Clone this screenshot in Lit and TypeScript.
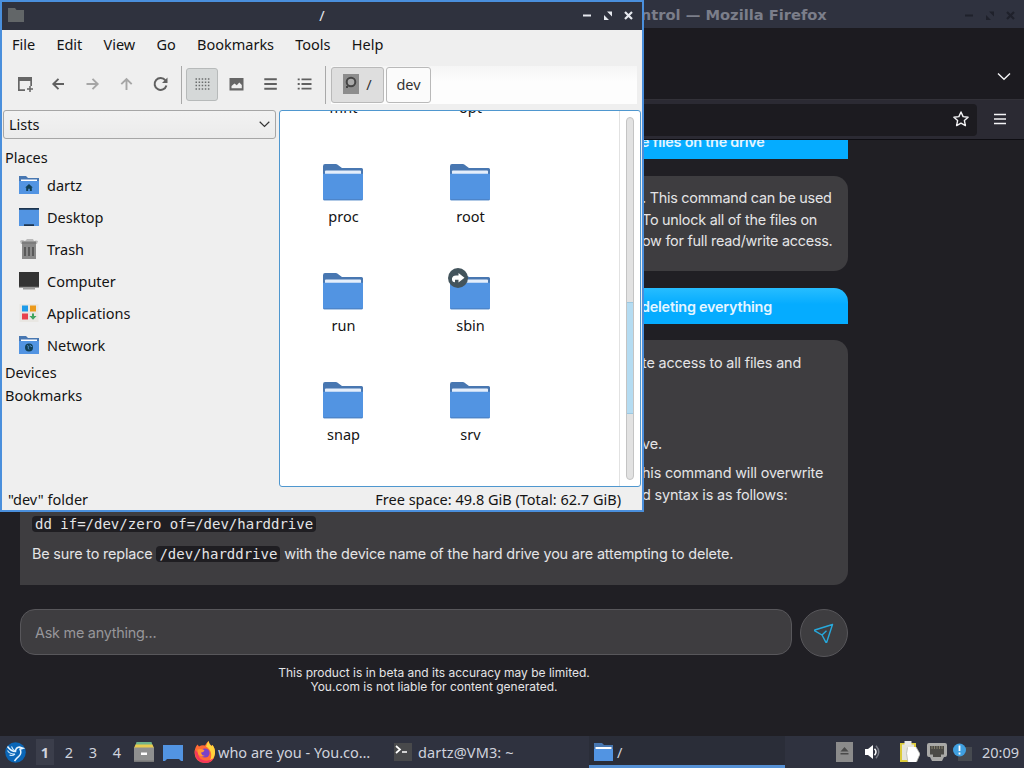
import { html, css, svg, LitElement } from 'lit'
import { customElement, property } from 'lit/decorators.js'
import { classMap } from 'lit/directives/class-map.js'

const folder = html`
  <svg width="48" height="48" viewBox="0 0 48 48">
    <path d="M4 7.200Q4 5 6 5h10.500q1.500 0 2.800 1.200L23 9h19.500Q44 9 44 10.500V24H4Z" fill="#4877b1"/>
    <path d="M6 12.500q0-.9.9-.9h34.200q.9 0 .9.900V20H6Z" fill="#e4eefb"/>
    <path d="M4 14.800h40V40q0 1.300-1.300 1.300H5.300Q4 41.300 4 40Z" fill="#5294e2"/>
    <path d="M4.300 40.400q.2.900 1.200.9h37q1 0 1.200-.9Z" fill="#4877b1"/>
  </svg>`

const smallFolder = (emblem: unknown) => html`
  <svg width="20" height="20" viewBox="0 0 20 20">
    <path d="M0 1h7l2 2h11v15H0Z" fill="#4877b1"/>
    <path d="M2 4.500h16V8H2Z" fill="#fff"/>
    <path d="M0 6h20v13H0Z" fill="#5294e2"/>
    ${emblem}
  </svg>`

const placeIcons: Record<string, unknown> = {
  home: smallFolder(svg`<path d="M10 9l-3.800 3.600h1V16h2v-2.200h1.600V16h2v-3.400h1Z" fill="#103f55"/>`),
  desktop: html`
    <svg width="20" height="20" viewBox="0 0 20 20">
      <path d="M0 1h20v18H0Z" fill="#5294e2"/>
      <path d="M0 1h20v1.800H0ZM5 17.300h10V19H5Z" fill="#1d344f"/>
    </svg>`,
  trash: html`
    <svg width="20" height="20" viewBox="0 0 20 20">
      <path d="M1 2q2-2 5 0l2-2h6l1 2q2-1 4 0l-1 3H2Z" fill="#b9b9b9"/>
      <path d="M3 4h14v16H3Z" fill="#8a8a8a"/>
      <path d="M3 2.500h14V5H3Z" fill="#7d7d7d"/>
      <path d="M6 8v9M10 8v9M14 8v9" stroke="#555" stroke-width="1.800"/>
    </svg>`,
  computer: html`
    <svg width="20" height="20" viewBox="0 0 20 20">
      <path d="M0 1h20v15H0Z" fill="#333"/>
      <path d="M0 15h20v1.500H0Z" fill="#494949"/>
      <path d="M4 16.500h12v2H4Z" fill="#999"/>
    </svg>`,
  applications: html`
    <svg width="20" height="20" viewBox="0 0 20 20">
      <path d="M.5 1h19v18H.5Z" fill="#e9e7e3"/>
      <path d="M3 2.500h6v6H3Z" fill="#1e9be9"/>
      <path d="M11 2.500h6v6h-6Z" fill="#eb9a1c"/>
      <path d="M3 10.500h6v6H3Z" fill="#e8414d"/>
      <path d="M13 10.500h2v2.500h2.500L14 16.700 10.500 13H13Z" fill="#3fa560"/>
    </svg>`,
  network: smallFolder(svg`
    <circle cx="10" cy="12.500" r="4" fill="#103f55"/>
    <path d="M8 10.500l1.800 1-.8 1.500 1 1.500M11 9.800l.6 1.500 1.600.4" stroke="#4d8ac6" fill="none"/>`),
}

const toolIcons: Record<string, unknown> = {
  newtab: svg`
    <path d="M2 1h14v9h-1.700V5H3.700v8.300H9V15H2Z" fill="#666"/>
    <path d="M14 10v6M11 13h6" stroke="#666" stroke-width="1.500"/>`,
  back: svg`<path d="M14 8H3M8.500 2.800L3.300 8l5.200 5.200" stroke="#606060" stroke-width="1.900" fill="none"/>`,
  forward: svg`<path d="M2.500 8h11M8.500 2.800L13.700 8l-5.200 5.200" stroke="#a6a6a6" stroke-width="1.900" fill="none"/>`,
  up: svg`<path d="M8.500 14V3M3.300 8.200L8.500 3l5.200 5.200" stroke="#a6a6a6" stroke-width="1.900" fill="none"/>`,
  reload: svg`
    <path d="M13.400 4.300A6 6 0 1 0 14.400 9.500" stroke="#606060" stroke-width="2" fill="none"/>
    <path d="M15.500 1.500V7h-5.500Z" fill="#606060"/>`,
  grid: svg`<path d="M1.500 3h14M1.500 6.300h14M1.500 9.600h14M1.500 13h14" stroke="#6b6d6d" stroke-width="1.500" stroke-dasharray="1.500 1.600"/>`,
  thumbs: svg`<path fill-rule="evenodd" d="M1.500 2h14v12.500h-14ZM3.500 12.300h10.300V9L11.300 6.500 8.800 9.300 6.500 7.500 3.500 10Z" fill="#666"/>`,
  compact: svg`<path d="M2.300 3.300h12.500M2.300 8h12.500M2.300 12.700h12.500" stroke="#606060" stroke-width="1.900"/>`,
  list: svg`
    <path d="M5.500 3.300h10M5.500 8h10M5.500 12.700h10" stroke="#606060" stroke-width="1.800"/>
    <path d="M1.700 3.300h2M1.700 8h2M1.700 12.700h2" stroke="#606060" stroke-width="1.800"/>`,
}

const toolIcon = (name: string) => html`<svg width="17" height="17" viewBox="0 0 17 17">${toolIcons[name]}</svg>`

const windowButtons = html`
  <svg width="54" height="11" viewBox="0 0 54 11">
    <path d="M1 5.500h8" stroke="currentColor" stroke-width="2"/>
    <path d="M22 10V5l5 5ZM30 1.500v5L25 1.500Z" fill="currentColor"/>
    <path d="M43 2l7 7M50 2l-7 7" stroke="currentColor" stroke-width="2.200"/>
  </svg>`

@customElement('file-manager')
export class FileManager extends LitElement {
  static styles = css`
  :host {
    display: flex;
    flex-direction: column;
    box-sizing: border-box;
    width: 644px;
    height: 512px;
    border: 2px solid #4a8fdc;
    background: #efefef;
    color: #141414;
    font: 14.5px/20px "Noto Sans", sans-serif;
    white-space: nowrap;
  }
  svg {
    display: block;
  }
  .title {
    display: grid;
    grid-template-columns: 75px 1fr 75px;
    align-items: center;
    height: 28px;
    background: #2f323e;
    color: #e6e8ee;
    text-align: center;
  }
  .title span {
    margin-top: -2px;
  }
  .title svg {
    margin-top: -2px;
  }
  .title svg:first-child {
    margin-left: 6px;
  }
  .title svg:last-child {
    margin-left: 15px;
  }
  .menu {
    display: flex;
    gap: 21.2px;
    height: 20px;
    padding: 4px 10px 9px;
  }
  .tools {
    display: flex;
    align-items: center;
    height: 43px;
    padding: 0 0 3px 5px;
  }
  .tool {
    display: grid;
    place-items: center;
    box-sizing: border-box;
    width: 34px;
    height: 33px;
  }
  .tool.active {
    width: 32px;
    margin: 0 1px;
    border: 1px solid #b7baba;
    border-radius: 3px;
    background: #d5d8d8;
  }
  .sep {
    width: 1px;
    height: 38px;
    margin: 0 3px 0 4px;
    background: #a9a9a9;
  }
  .path {
    display: flex;
    flex: 1;
    align-items: center;
    gap: 2px;
    height: 38px;
    margin: 0 5px 0 2px;
    background: linear-gradient(#f5f5f5, #fdfdfd 40%);
  }
  .crumb {
    display: flex;
    box-sizing: border-box;
    align-items: center;
    justify-content: center;
    gap: 7px;
    width: 45px;
    height: 36px;
    padding-bottom: 2px;
    border: 1px solid #b9b9b9;
    border-radius: 3px;
    background: #fbfbfb;
    color: #333;
  }
  .crumb.root {
    width: 53px;
    background: #dedede;
  }
  .body {
    display: grid;
    grid-template-columns: 274px 362px;
    column-gap: 2px;
    height: 377px;
    padding: 1px 1px 0;
  }
  .combo {
    display: flex;
    box-sizing: border-box;
    align-items: center;
    justify-content: space-between;
    width: 273px;
    height: 29px;
    padding: 0 5px 2px;
    border: 1px solid #a6a6a6;
    border-radius: 3px;
    background: linear-gradient(#f2f2f2, #ebebeb);
  }
  .combo svg {
    margin-top: 2px;
  }
  .head {
    height: 23px;
    padding-left: 2px;
    line-height: 23px;
  }
  .head.first {
    margin-top: 7px;
  }
  .place {
    display: flex;
    align-items: center;
    gap: 8px;
    height: 32px;
    padding-left: 16px;
  }
  .view {
    display: flex;
    box-sizing: border-box;
    height: 377px;
    border: 1px solid #4f97cf;
    border-radius: 3px;
    background: #fff;
    overflow: hidden;
  }
  .files {
    display: grid;
    flex: 1;
    grid-template-columns: 127px 127px;
    grid-auto-rows: 109px;
    align-content: start;
    margin-top: -61px;
    border-right: 1px solid #e2e2e2;
  }
  .file {
    display: flex;
    flex-direction: column;
    align-items: center;
    position: relative;
  }
  .file > svg {
    margin: 0 1px -1px 0;
  }
  .file .link {
    position: absolute;
    left: 41px;
    top: 0;
  }
  .track {
    box-sizing: border-box;
    width: 8px;
    height: 363px;
    margin: 6px 6px 0;
    padding-top: 184px;
    border: 1px solid #c4c4c4;
    border-radius: 4px;
    background: #e2e2e2;
  }
  .thumb {
    height: 112px;
    background: #b5dcf2;
    border: solid #9dc9e2;
    border-width: 1px 0;
    box-sizing: border-box;
  }
  .status {
    display: flex;
    flex: 1;
    align-items: center;
    justify-content: space-between;
    padding: 0 21px 0 6px;
  }
  `

  /** Lines of the menu bar */
  @property({ type: Array })
  menus = ['File', 'Edit', 'View', 'Go', 'Bookmarks', 'Tools', 'Help']

  @property({ type: Array })
  places = [
    ['home', 'dartz'],
    ['desktop', 'Desktop'],
    ['trash', 'Trash'],
    ['computer', 'Computer'],
    ['applications', 'Applications'],
    ['network', 'Network'],
  ]

  @property({ type: Array })
  files = ['mnt', 'opt', 'proc', 'root', 'run', 'sbin', 'snap', 'srv']

  private renderTool(name: string) {
    return html`<div class=${classMap({ tool: true, active: name === 'grid' })}>${toolIcon(name)}</div>`
  }

  private renderFile(name: string) {
    return html`
      <div class="file">
        ${folder}
        ${name === 'sbin' ? html`
          <svg class="link" width="20" height="20" viewBox="0 0 20 20">
            <circle cx="10" cy="10" r="10" fill="#43545c"/>
            <path d="M10.500 5l6 4.800-6 4.700v-2.700H7v2.500Q3.500 14 4 10.500 4.500 7.700 8 7.500h2.500Z" fill="#fff"/>
          </svg>` : ''}
        <span>${name}</span>
      </div>`
  }

  render() {
    return html`
      <div class="title">
        <svg width="16" height="14" viewBox="0 0 16 14"><path d="M0 0h7l1.500 2H16v12H0Z" fill="#626668"/></svg>
        <span>/</span>
        ${windowButtons}
      </div>
      <div class="menu">${this.menus.map(m => html`<span>${m}</span>`)}</div>
      <div class="tools">
        ${['newtab', 'back', 'forward', 'up', 'reload'].map(n => this.renderTool(n))}
        <div class="sep"></div>
        ${['grid', 'thumbs', 'compact', 'list'].map(n => this.renderTool(n))}
        <div class="sep"></div>
        <div class="path">
          <div class="crumb root">
            <svg width="16" height="20" viewBox="0 0 16 20">
              <path d="M0 0h16v20H0Z" fill="#8d8d8d"/>
              <circle cx="8" cy="8" r="4.300" fill="#aaa" stroke="#454545" stroke-width="2"/>
              <path d="M4 12v2" stroke="#454545" stroke-width="2"/>
            </svg>
            <span>/</span>
          </div>
          <div class="crumb">dev</div>
        </div>
      </div>
      <div class="body">
        <div>
          <div class="combo">
            <span>Lists</span>
            <svg width="11" height="7" viewBox="0 0 11 7"><path d="M.7.8l4.800 4.700L10.300.8" stroke="#333" stroke-width="1.200" fill="none"/></svg>
          </div>
          <div class="head first">Places</div>
          ${this.places.map(([icon, name]) => html`<div class="place">${placeIcons[icon]}<span>${name}</span></div>`)}
          <div class="head">Devices</div>
          <div class="head">Bookmarks</div>
        </div>
        <div class="view">
          <div class="files">${this.files.map(f => this.renderFile(f))}</div>
          <div class="track"><div class="thumb"></div></div>
        </div>
      </div>
      <div class="status">
        <span>"dev" folder</span>
        <span class="space">Free space: 49.8 GiB (Total: 62.7 GiB)</span>
      </div>
    `
  }
}

@customElement('browser-window')
export class BrowserWindow extends LitElement {
  static styles = css`
  :host {
    display: flex;
    flex-direction: column;
    width: 1024px;
    height: 736px;
    background: #201f24;
    color: #e4e4e6;
    font: 14.4px/21.6px Inter, sans-serif;
    white-space: nowrap;
  }
  svg {
    display: block;
  }
  .title {
    display: flex;
    box-sizing: border-box;
    justify-content: space-between;
    align-items: center;
    height: 28px;
    padding: 2px 6px 0 620px;
    background: #2f323f;
    color: #7b7e8a;
    font: bold 14.67px/20px "DejaVu Sans", sans-serif;
  }
  .title svg {
    color: #1f212b;
  }
  .tabs {
    display: flex;
    justify-content: flex-end;
    align-items: center;
    box-sizing: border-box;
    height: 71px;
    padding: 26px 13px 0 0;
    background: #1c1b20;
  }
  .nav {
    display: flex;
    box-sizing: border-box;
    align-items: center;
    height: 41px;
    padding-right: 17px;
    gap: 16px;
    border-top: 1px solid #323138;
    border-bottom: 1px solid #0e0d12;
    background: #2b2a33;
  }
  .nav > svg {
    margin-top: -2px;
  }
  .url {
    display: flex;
    flex: 1;
    justify-content: flex-end;
    align-items: center;
    height: 32px;
    padding-right: 8px;
    border-radius: 0 4px 4px 0;
    background: #1c1b20;
  }
  .url svg {
    margin-top: -1px;
  }
  .chat {
    display: flex;
    flex-direction: column;
    width: 828px;
    padding-left: 20px;
    letter-spacing: -.16px;
  }
  .ask {
    box-sizing: border-box;
    height: 36px;
    padding: 8px 0 0 621px;
    border-radius: 14px 14px 0 0;
    background: linear-gradient(#27bdff, #05acff 45%);
    color: #e4f5ff;
    font-weight: 600;
    letter-spacing: -.22px;
  }
  .ask.cut {
    height: 19px;
    padding-top: 0;
    border-radius: 0;
    background: #05acff;
    overflow: hidden;
  }
  .ask.cut span {
    display: block;
    margin-top: -9px;
  }
  .answer {
    box-sizing: border-box;
    height: 95px;
    margin: 17px 0;
    padding: 11px 12px 0;
    border-radius: 14px 14px 14px 0;
    background: #3e3d40;
    letter-spacing: -.25px;
  }
  .answer.long {
    height: 245px;
    margin: 16px 0 24px;
    padding-top: 12px;
    border-radius: 14px 14px 14px 0;
    letter-spacing: -.16px;
  }
  .answer.long, .answer {
    border-radius: 14px 14px 14px 0;
  }
  .tail {
    padding-left: 610px;
  }
  .gap {
    height: 59px;
  }
  p {
    margin: 0 0 8px;
  }
  code {
    padding: 0 3px;
    border-radius: 4px;
    background: #1f1e22;
    font: 14px/17px "DejaVu Sans Mono", monospace;
    letter-spacing: 0;
  }
  .entry {
    display: flex;
    gap: 8px;
    height: 48px;
  }
  .input {
    flex: 1;
    height: 44px;
    padding-left: 14px;
    border: 1px solid #58575b;
    border-radius: 15px;
    background: #3e3d40;
    color: #97969a;
    line-height: 46px;
    letter-spacing: -.24px;
  }
  .send {
    display: grid;
    place-items: center;
    width: 46px;
    height: 46px;
    border: 1px solid #58575b;
    border-radius: 50%;
    background: #3e3d40;
  }
  .note {
    padding-top: 9px;
    font-size: 12px;
    line-height: 14px;
    letter-spacing: 0;
    text-align: center;
  }
  `

  render() {
    return html`
      <div class="title"><span>Control — Mozilla Firefox</span>${windowButtons}</div>
      <div class="tabs">
        <svg width="14" height="9" viewBox="0 0 14 9"><path d="M1 1.500l6 5.700 6-5.700" stroke="#f4f4f6" stroke-width="1.400" fill="none"/></svg>
      </div>
      <div class="nav">
        <div class="url">
          <svg width="16" height="16" viewBox="0 0 16 16">
            <path d="M8 1l2.100 4.600 5 .6-3.700 3.400 1 5L8 12.100l-4.400 2.500 1-5L.9 6.200l5-.6Z" stroke="#f4f4f6" stroke-width="1.400" stroke-linejoin="round" fill="none"/>
          </svg>
        </div>
        <svg width="14" height="12" viewBox="0 0 14 12"><path d="M1 1.500h12M1 6h12M1 10.500h12" stroke="#f4f4f6" stroke-width="1.400"/></svg>
      </div>
      <div class="chat">
        <div class="ask cut"><span>e files on the drive</span></div>
        <div class="answer">
          <div class="tail">. This command can be used</div>
          <div class="tail">To unlock all of the files on</div>
          <div class="tail">ow for full read/write access.</div>
        </div>
        <div class="ask">deleting everything</div>
        <div class="answer long">
          <div class="tail">te access to all files and</div>
          <div class="gap"></div>
          <p class="tail">ve.</p>
          <div class="tail">his command will overwrite</div>
          <p class="tail">d syntax is as follows:</p>
          <p><code>dd if=/dev/zero of=/dev/harddrive</code></p>
          <p>Be sure to replace <code>/dev/harddrive</code> with the device name of the hard drive you are attempting to delete.</p>
        </div>
        <div class="entry">
          <div class="input">Ask me anything...</div>
          <div class="send">
            <svg width="20" height="20" viewBox="0 0 20 20">
              <path d="M18.500 1.500L.8 7q-.5.400 0 .8L8 12l3.800 7.200q.5.500.9 0ZM8 12l4.500-4.300" stroke="#27a9dc" stroke-width="1.400" stroke-linejoin="round" fill="none"/>
            </svg>
          </div>
        </div>
        <div class="note">
          This product is in beta and its accuracy may be limited.<br>
          You.com is not liable for content generated.
        </div>
      </div>
    `
  }
}

@customElement('task-bar')
export class TaskBar extends LitElement {
  static styles = css`
  :host {
    display: flex;
    align-items: center;
    width: 1024px;
    height: 32px;
    background: #2f323f;
    color: #d0d3dd;
    font: 14.5px/20px "Noto Sans", sans-serif;
    white-space: nowrap;
  }
  svg {
    display: block;
    flex: none;
  }
  .start {
    margin: 0 7px 0 5px;
  }
  .desk {
    width: 24px;
    line-height: 26px;
    text-align: center;
  }
  .desk.active {
    width: 18px;
    margin: 0 3px;
    background: #3b3e4b;
    font-weight: bold;
  }
  .launch {
    display: flex;
    gap: 9px;
    margin: 0 11px 0 5px;
  }
  .task {
    display: flex;
    box-sizing: border-box;
    align-items: center;
    gap: 2px;
    height: 32px;
    width: 200px;
  }
  .task.term {
    width: 195px;
    gap: 6px;
    letter-spacing: .12px;
  }
  .task.active {
    width: 196px;
    padding: 3px 0 0 5px;
    border-bottom: 3px solid #5590d4;
    background: #2a2d38;
    gap: 4px;
  }
  .tray {
    display: flex;
    flex: 1;
    align-items: center;
    justify-content: flex-end;
    padding-right: 5px;
  }
  .clock {
    margin-left: 10px;
  }
  .vol {
    margin: 0 19px 0 11px;
  }
  .net {
    margin: 0 6px 0 7px;
  }
  `

  render() {
    return html`
      <svg class="start" width="21" height="21" viewBox="0 0 21 21">
        <circle cx="10.500" cy="10.500" r="10.300" fill="#0a66b7"/>
        <path d="M2.500 4.500Q6 9.500 10.500 9.500q0-4 4-4.500l3.500 1.200-3 1q2.300 4.500-1.500 7.500-2 1.500-4 4.300" stroke="#e9f6ff" stroke-width="1.500" fill="none"/>
        <path d="M2.500 8.500q2.500 4 7.500 3.500M6.500 4.500q1 3 4 5M4.500 13q3 1.500 5.500-1" stroke="#cfe8fb" stroke-width="1.100" fill="none"/>
      </svg>
      ${[1, 2, 3, 4].map(n => html`<div class=${classMap({ desk: true, active: n === 1 })}>${n}</div>`)}
      <div class="launch">
        <svg width="20" height="20" viewBox="0 0 20 20">
          <path d="M2.500 0h15l1 3.500h-17Z" fill="#6fb38b"/>
          <path d="M1.500 2.500h17L20 6H0Z" fill="#e9cb4e"/>
          <path d="M0 5.500h20V20H0Z" fill="#8f9090"/>
          <path d="M0 18.500h20V20H0Z" fill="#777"/>
          <path d="M7 10.500h6v2.500H7Z" fill="#fff"/>
        </svg>
        <svg width="20" height="20" viewBox="0 0 20 20">
          <path d="M0 3h20v16h-2l-2-2H4l-2 2H0Z" fill="#5294e2"/>
        </svg>
      </div>
      <div class="task">
        <svg width="22" height="22" viewBox="0 0 22 22">
          <path d="M3.500 3.500L5 5.500q3-2 6-1 1.500-3 3.500-4.500.5 3 3 5l1-1q3 4 2.500 8.500Q20 22 11 22 1 21.500.5 12 .5 7 3.500 3.500Z" fill="#ff6a35"/>
          <path d="M14.500 0q.5 3 3 5l1-1q3 4 2.500 8.500-.8 6-6 8.300 3-4 2-8.800-1-4-5-6.500 1-3.500 2.500-5.500Z" fill="#ffd43c"/>
          <path d="M1 9Q.5 21 11 22q6 0 9-5-6 4-11 2-5-1.800-5-7Z" fill="#f4365c"/>
          <circle cx="11" cy="12" r="4.600" fill="#7a42c7"/>
          <path d="M3.500 8.500q4-1.500 7 .7-1 2.500-3.500 2.300.5 3 4 3.500-5 1.500-7-2Z" fill="#ff9633"/>
        </svg>
        <span class="web">who are you - You.co…</span>
      </div>
      <div class="task term">
        <svg width="18" height="18" viewBox="0 0 18 18">
          <path d="M0 0h18v18H0Z" fill="#48494b"/>
          <path d="M2 3l4 3.500L2 10M8 9h5" stroke="#fff" stroke-width="1.700" fill="none"/>
        </svg>
        <span>dartz@VM3: ~</span>
      </div>
      <div class="task active">
        <svg width="19" height="20" viewBox="0 0 19 20">
          <path d="M0 1h8l2 2h9v8H0Z" fill="#4877b1"/>
          <path d="M1.500 5h16v3h-16Z" fill="#fff"/>
          <path d="M0 7h19v12H0Z" fill="#5294e2"/>
        </svg>
        <span>/</span>
      </div>
      <div class="tray">
        <svg width="17" height="20" viewBox="0 0 17 20">
          <path d="M0 0h17v20H0Z" fill="#8b8b8b"/>
          <path d="M8.500 5l4 4.500h-8ZM4.500 11h8v1.500h-8Z" fill="#4a4a4a"/>
        </svg>
        <svg class="vol" width="17" height="16" viewBox="0 0 17 16">
          <path d="M1 5h3L9 1v14L4 11H1Z" fill="#fff"/>
          <path d="M10.500 4.800q3 3.200 0 6.400" stroke="#fff" stroke-width="1.500" fill="none"/>
          <path d="M12 1.800q5.500 6.200 0 12.400" stroke="#777a84" stroke-width="1.500" fill="none"/>
        </svg>
        <svg width="20" height="22" viewBox="0 0 20 22">
          <path d="M0 2h16v19H0Z" fill="#dccb3b"/>
          <path d="M2 3.500h12V19H2Z" fill="#e4e4dc"/>
          <path d="M4.500 0h7v4h-7Z" fill="#e8e8e8"/>
          <path d="M8 6h8l4 7-3.500 8H8l-1-9Z" fill="#fff"/>
          <path d="M7.500 6.500l-1 6 1.300 8M16 6l4 7-3.500 8" stroke="#bcbcb4" stroke-width=".8" fill="none"/>
        </svg>
        <svg class="net" width="20" height="18" viewBox="0 0 20 18">
          <path d="M2 0h16q2 0 2 2v10q0 2-2 2h-1l-2 4H5l-2-4H2q-2 0-2-2V2q0-2 2-2Z" fill="#a9a9a7"/>
          <path d="M3 3h14v8.500h-3V14H6v-2.500H3Z" fill="#4b4a46"/>
          <path d="M5 3v3M7.500 3v3M10 3v3M12.500 3v3M15 3v3" stroke="#85806c"/>
        </svg>
        <svg width="19" height="19" viewBox="0 0 19 19">
          <path d="M5 4h14v14H5Z" fill="#464a50"/>
          <circle cx="6.500" cy="7" r="6.500" fill="#3f9fe0"/>
          <path d="M6.500 2.500V8M6.500 9.500v2" stroke="#fff" stroke-width="1.800"/>
        </svg>
        <span class="clock">20:09</span>
      </div>
    `
  }
}

@customElement('app-root')
export class AppRoot extends LitElement {
  static styles = css`
  :host {
    display: block;
    position: relative;
    width: 1024px;
    height: 768px;
    overflow: hidden;
  }
  file-manager {
    position: absolute;
    top: 0;
    left: 0;
  }
  `

  render() {
    return html`
      <browser-window></browser-window>
      <task-bar></task-bar>
      <file-manager></file-manager>
    `
  }
}

declare global {
  interface HTMLElementTagNameMap {
    'app-root': AppRoot
    'browser-window': BrowserWindow
    'file-manager': FileManager
    'task-bar': TaskBar
  }
}
